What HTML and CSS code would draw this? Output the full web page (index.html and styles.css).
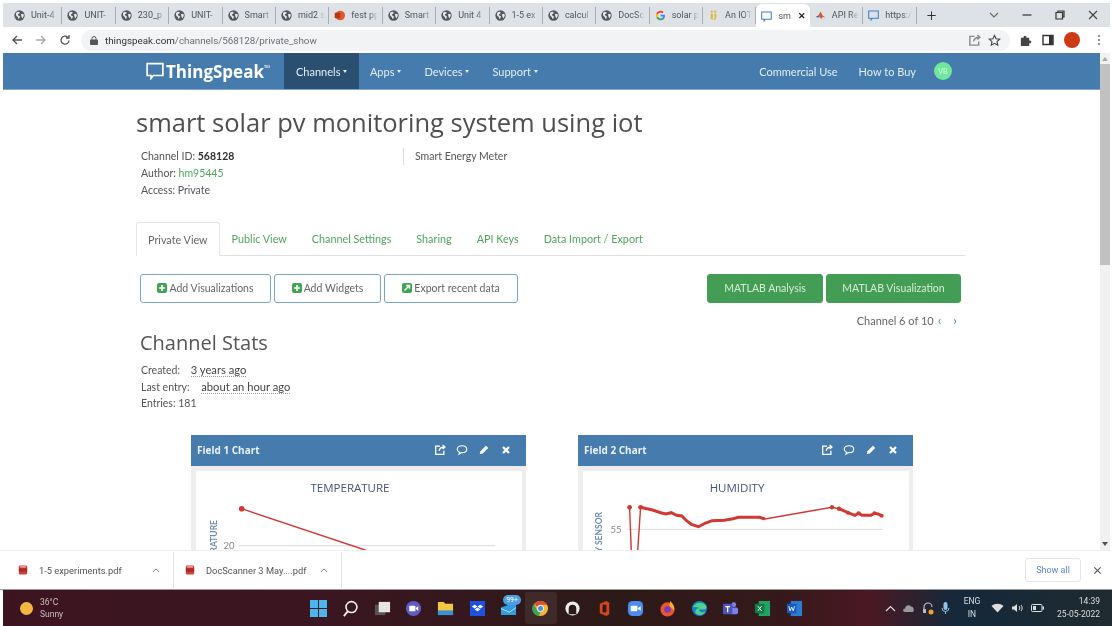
FILE: index.html
```html
<!DOCTYPE html>
<html lang="en">
<head>
  <meta charset="UTF-8">
  <title>smart solar pv monitoring system using iot - ThingSpeak</title>
  <link rel="stylesheet" href="styles.css">
</head>
<body>
  <svg class="sprite" width="0" height="0">
    <symbol id="globe" viewBox="0 0 16 16">
      <circle cx="8" cy="8" r="7.5" fill="#55585c"/>
      <path d="M3 4l3-1.5 2.5 1-1 2-2 .5 1 2.5 2 .5-.5 3-1.5 1-1-3-2.5-2zM10 6l3.5-.5.8 3-2 3.500-1.300-2z" fill="#e8eaed"/>
    </symbol>
    <symbol id="bubble" viewBox="0 0 16 16">
      <path d="M1 1.500h14v10.500h-8.500l-2 2.500v-2.500h-3.500z" fill="none" stroke="currentColor" stroke-width="1.500"/>
    </symbol>
    <symbol id="share" viewBox="0 0 14 14">
      <path d="M7 2.500h-5v9.500h9.500v-4M6 8c.5-3 2.500-4.500 6.500-4.500M10 1l2.800 2.500-2.800 2.500" fill="none" stroke="currentColor" stroke-width="1.500"/>
    </symbol>
    <symbol id="comment" viewBox="0 0 14 14">
      <path d="M7 2c3.300 0 5.500 1.800 5.500 4s-2.200 4-5.500 4l-1 0-2.500 2 .4-2.600c-1.600-.7-2.400-2-2.400-3.400 0-2.200 2.200-4 5.500-4z" fill="none" stroke="currentColor" stroke-width="1.300"/>
    </symbol>
    <symbol id="pencil" viewBox="0 0 14 14">
      <path d="M2 12l.8-3.500 6.500-6.500 2.700 2.700-6.500 6.500z" fill="currentColor"/>
    </symbol>
    <symbol id="cross" viewBox="0 0 14 14">
      <path d="M3.500 3.500l7 7m0-7l-7 7" fill="none" stroke="currentColor" stroke-width="2.600"/>
    </symbol>
    <symbol id="plus-box" viewBox="0 0 12 12">
      <rect width="12" height="12" rx="2.500" fill="#43a353"/>
      <path d="M6 2.500v7M2.500 6h7" stroke="#fff" stroke-width="2"/>
    </symbol>
    <symbol id="pdf" viewBox="0 0 12 12">
      <path d="M2 .5h8l1 1v9l-1 1h-8l-1-1v-9z" fill="#d0403a"/>
      <rect x="1" y="4" width="10" height="4" fill="#a82a2a"/>
      <rect x="2.500" y="1.500" width="7" height="1.500" fill="#f3b9b5"/>
    </symbol>
  </svg>

  <div class="tabstrip">
    <div class="tab"><svg class="favicon"><use href="#globe"/></svg><span>Unit-4</span></div>
    <div class="tab"><svg class="favicon"><use href="#globe"/></svg><span>UNIT-</span></div>
    <div class="tab"><svg class="favicon"><use href="#globe"/></svg><span>230_p</span></div>
    <div class="tab"><svg class="favicon"><use href="#globe"/></svg><span>UNIT-</span></div>
    <div class="tab"><svg class="favicon"><use href="#globe"/></svg><span>Smart</span></div>
    <div class="tab"><svg class="favicon"><use href="#globe"/></svg><span>mid2 s</span></div>
    <div class="tab">
      <svg class="favicon" viewBox="0 0 16 16"><circle cx="9" cy="8" r="7" fill="#e2572b"/><rect x="1" y="4" width="8" height="8" rx="1" fill="#b7361a"/></svg>
      <span>fest pp</span>
    </div>
    <div class="tab"><svg class="favicon"><use href="#globe"/></svg><span>Smart</span></div>
    <div class="tab"><svg class="favicon"><use href="#globe"/></svg><span>Unit 4</span></div>
    <div class="tab"><svg class="favicon"><use href="#globe"/></svg><span>1-5 ex</span></div>
    <div class="tab"><svg class="favicon"><use href="#globe"/></svg><span>calcul</span></div>
    <div class="tab"><svg class="favicon"><use href="#globe"/></svg><span>DocSc</span></div>
    <div class="tab">
      <svg class="favicon" viewBox="0 0 16 16">
        <path d="M14.500 8.200c0-.5 0-1-.1-1.400h-6.300v2.700h3.600c-.2.900-.7 1.600-1.400 2.100l2.200 1.700c1.300-1.200 2-3 2-5.100z" fill="#4285f4"/>
        <path d="M8.100 15c1.900 0 3.400-.6 4.500-1.700l-2.200-1.700c-.6.400-1.400.7-2.300.7-1.800 0-3.300-1.200-3.800-2.800l-2.300 1.800c1.100 2.200 3.400 3.700 6.100 3.700z" fill="#34a853"/>
        <path d="M4.300 9.500c-.3-.9-.3-1.900 0-2.800l-2.300-1.800c-1 1.900-1 4.400 0 6.400z" fill="#fbbc05"/>
        <path d="M8.100 3.800c1 0 1.900.3 2.600 1l1.900-1.900c-1.200-1.100-2.800-1.800-4.500-1.800-2.700 0-5 1.500-6.100 3.800l2.300 1.800c.5-1.700 2-2.900 3.800-2.900z" fill="#ea4335"/>
      </svg>
      <span>solar p</span>
    </div>
    <div class="tab">
      <svg class="favicon" viewBox="0 0 16 16"><path d="M4 1h3v3h-3zM9 1h3v3h-3zM4 5.500h3v8h-3zM9 5.500h3v6l-2 3h-2l1-2.500h1z" fill="#e0b53c"/></svg>
      <span>An IOT</span>
    </div>
    <div class="tab tab-active"><svg class="favicon tab-blue"><use href="#bubble"/></svg><span>sm</span><b class="tab-close">✕</b></div>
    <div class="tab">
      <svg class="favicon" viewBox="0 0 16 16"><path d="M1 10l4-2 3-6 3 6 4 3-4-1-2 3-3-4z" fill="#d9552a"/><path d="M1 10l4-2 2 2-3 1z" fill="#2f6fb5"/></svg>
      <span>API Re</span>
    </div>
    <div class="tab"><svg class="favicon tab-blue"><use href="#bubble"/></svg><span>https:/</span></div>
    <div class="new-tab">+</div>
    <div class="window-controls">
      <svg width="12" height="12" viewBox="0 0 12 12"><path d="M2 4l4 4 4-4" fill="none" stroke="#666" stroke-width="1.100"/></svg>
      <svg width="12" height="12" viewBox="0 0 12 12"><path d="M1.500 6h9" stroke="#333" stroke-width="1.200"/></svg>
      <svg width="12" height="12" viewBox="0 0 12 12"><path d="M2 3.500h6.500v6.500h-6.500zM4 3.500v-1.500h6v6h-1.500" fill="none" stroke="#333" stroke-width="1.200"/></svg>
      <svg width="12" height="12" viewBox="0 0 12 12"><path d="M2 2l8 8m0-8l-8 8" stroke="#444" stroke-width="1.100"/></svg>
    </div>
  </div>

  <div class="toolbar">
    <div class="nav-buttons">
      <svg width="12" height="12" viewBox="0 0 12 12"><path d="M11 6h-9M6 2l-4 4 4 4" fill="none" stroke="#555" stroke-width="1.300"/></svg>
      <svg width="12" height="12" viewBox="0 0 12 12"><path d="M1 6h9M6 2l4 4-4 4" fill="none" stroke="#aaa" stroke-width="1.300"/></svg>
      <svg width="12" height="12" viewBox="0 0 12 12"><path d="M10 6.500a4 4 0 1 1-1.200-3.200M10 1v3h-3" fill="none" stroke="#555" stroke-width="1.300"/></svg>
    </div>
    <div class="omnibox">
      <svg width="8" height="9" viewBox="0 0 8 9"><rect y="3.500" width="8" height="5.500" rx="1" fill="#555"/><path d="M2 4v-1.500a2 2 0 0 1 4 0v1.500" fill="none" stroke="#555"/></svg>
      <span class="url"><b>thingspeak.com</b>/channels/568128/private_show</span>
      <svg class="omni-share"><use href="#share"/></svg>
      <svg width="13" height="13" viewBox="0 0 14 14"><path d="M7 1.500l1.700 3.600 3.900.5-2.900 2.600.8 3.900-3.500-2-3.500 2 .8-3.900-2.900-2.600 3.900-.5z" fill="none" stroke="#444" stroke-width="1.200"/></svg>
    </div>
    <div class="toolbar-icons">
      <svg width="13" height="13" viewBox="0 0 14 14"><path d="M2 4h3c-.8-3 3.800-3 3 0h3v3c3-.8 3 3.800 0 3v3h-9z" fill="#444"/></svg>
      <svg width="12" height="12" viewBox="0 0 12 12"><path d="M1 1.500h10v9h-10z" fill="none" stroke="#333" stroke-width="1.400"/><rect x="7" y="1.500" width="4" height="9" fill="#333"/></svg>
      <span class="profile"></span>
      <svg class="menu-dots" width="4" height="12" viewBox="0 0 4 12"><circle cx="2" cy="2" r="1" fill="#666"/><circle cx="2" cy="6" r="1" fill="#666"/><circle cx="2" cy="10" r="1" fill="#666"/></svg>
    </div>
  </div>

  <div class="viewport">
    <div class="page">
      <header class="site-nav">
        <div class="brand">
          <svg class="brand-icon"><use href="#bubble"/></svg>
          <span>ThingSpeak</span><sup>™</sup>
        </div>
        <a class="nav-item nav-active">Channels <i class="caret"></i></a>
        <a class="nav-item nav-apps">Apps <i class="caret"></i></a>
        <a class="nav-item">Devices<i class="caret"></i></a>
        <a class="nav-item">Support<i class="caret"></i></a>
        <a class="nav-item nav-right">Commercial Use</a>
        <a class="nav-item nav-buy">How to Buy</a>
        <span class="avatar">VB</span>
      </header>

      <main class="content">
        <h1>smart solar pv monitoring system using iot</h1>
        <div class="channel-info">
          <div class="channel-meta">
            <div>Channel ID: <b>568128</b></div>
            <div>Author: <a class="link">hm95445</a></div>
            <div>Access: Private</div>
          </div>
          <div class="channel-desc">Smart Energy Meter</div>
        </div>

        <nav class="tabs">
          <a class="page-tab page-tab-active">Private View</a>
          <a class="page-tab">Public View</a>
          <a class="page-tab">Channel Settings</a>
          <a class="page-tab">Sharing</a>
          <a class="page-tab">API Keys</a>
          <a class="page-tab">Data Import / Export</a>
        </nav>

        <div class="actions">
          <button class="btn btn-vis"><svg class="btn-icon"><use href="#plus-box"/></svg>Add Visualizations</button>
          <button class="btn btn-wid"><svg class="btn-icon"><use href="#plus-box"/></svg>Add Widgets</button>
          <button class="btn btn-exp">
            <svg class="btn-icon" viewBox="0 0 12 12"><rect width="12" height="12" rx="2.500" fill="#43a353"/><path d="M3 9l5-5M5 3h4v4" fill="none" stroke="#fff" stroke-width="1.600"/></svg>Export recent data
          </button>
          <button class="btn btn-green btn-ana">MATLAB Analysis</button>
          <button class="btn btn-green btn-matvis">MATLAB Visualization</button>
        </div>

        <div class="pager">Channel 6 of 10 <span class="pager-arrows"><i>‹</i><i>›</i></span></div>

        <h2>Channel Stats</h2>
        <div class="stats">
          <div>Created: <abbr>3 years ago</abbr></div>
          <div>Last entry: <abbr>about an hour ago</abbr></div>
          <div>Entries: 181</div>
        </div>

        <div class="charts">
          <section class="chart-panel">
            <div class="chart-head">
              <span>Field 1 Chart</span>
              <div class="chart-tools">
                <svg><use href="#share"/></svg><svg><use href="#comment"/></svg><svg><use href="#pencil"/></svg><svg><use href="#cross"/></svg>
              </div>
            </div>
            <div class="chart-body">
              <svg class="chart" viewBox="0 0 326 120">
                <text class="chart-title" x="154" y="21">TEMPERATURE</text>
                <line class="grid" x1="43" y1="74.700" x2="299" y2="74.700"/>
                <text class="tick" x="33" y="78">20</text>
                <text class="axis-label" transform="translate(21 49) rotate(-90)">TEMPERATURE</text>
                <polyline class="series" points="45.700,37.700 169,79 230,105"/>
                <circle class="dot" cx="45.700" cy="37.700" r="2.800"/>
              </svg>
            </div>
          </section>
          <section class="chart-panel">
            <div class="chart-head">
              <span>Field 2 Chart</span>
              <div class="chart-tools">
                <svg><use href="#share"/></svg><svg><use href="#comment"/></svg><svg><use href="#pencil"/></svg><svg><use href="#cross"/></svg>
              </div>
            </div>
            <div class="chart-body">
              <svg class="chart" viewBox="0 0 326 120">
                <text class="chart-title" x="154" y="21">HUMIDITY</text>
                <line class="grid" x1="44" y1="58.300" x2="300" y2="58.300"/>
                <text class="tick" x="33" y="62">55</text>
                <text class="axis-label" transform="translate(19 41) rotate(-90)">HUMIDITY SENSOR</text>
                <polyline class="series" points="46.600,36.300 48.700,90 54,90 57.600,36.300 61.800,37.300 69.600,39 77.700,41.700 83,43 88.300,41.700 93.600,44.300 98.900,45 103.500,49.700 108.400,53.300 115.500,55.700 121.900,52.300 129,49.700 141.300,49.300 150,47.700 155.400,46.300 176.600,46.300 182,48 249,36.300 256,37.700 265,41.700 272,44.300 275.600,42.300 279,44.300 288,44.300 291.500,42.300 295,43 298.600,44.700"/>
                <polyline class="series series-thick" points="57.600,36.300 61.800,37.300 69.600,39 77.700,41.700 83,43 88.300,41.700 93.600,44.300 98.900,45 103.500,49.700 108.400,53.300 115.500,55.700 121.900,52.300 129,49.700 141.300,49.300 150,47.700 155.400,46.300 176.600,46.300 182,48"/>
                <polyline class="series series-thick" points="256,37.700 265,41.700 272,44.300 275.600,42.300 279,44.300 288,44.300 291.500,42.300 295,43 298.600,44.700"/>
                <circle class="dot" cx="46.600" cy="36.300" r="2.400"/>
                <circle class="dot" cx="57.600" cy="36.300" r="2.400"/>
                <circle class="dot" cx="249" cy="36.300" r="2.200"/>
                <circle class="dot" cx="256" cy="37.700" r="2.200"/>
                <circle class="dot" cx="265" cy="41.700" r="2"/>
                <circle class="dot" cx="275.600" cy="42.300" r="2"/>
                <circle class="dot" cx="291.500" cy="42.300" r="2"/>
                <circle class="dot" cx="298.600" cy="44.700" r="2"/>
              </svg>
            </div>
          </section>
        </div>
      </main>
    </div>
    <div class="scrollbar">
      <span class="scroll-up"></span>
      <span class="scroll-thumb"></span>
      <span class="scroll-down"></span>
    </div>
  </div>

  <div class="downloads">
    <div class="download dl-first">
      <svg class="pdf-icon"><use href="#pdf"/></svg>
      <span>1-5 experiments.pdf</span>
      <svg class="dl-chevron" viewBox="0 0 10 6"><path d="M1 5l4-4 4 4" fill="none" stroke="#666" stroke-width="1.100"/></svg>
    </div>
    <div class="download dl-second">
      <svg class="pdf-icon"><use href="#pdf"/></svg>
      <span>DocScanner 3 May....pdf</span>
      <svg class="dl-chevron" viewBox="0 0 10 6"><path d="M1 5l4-4 4 4" fill="none" stroke="#666" stroke-width="1.100"/></svg>
    </div>
    <button class="show-all">Show all</button>
    <svg class="dl-close" viewBox="0 0 10 10"><path d="M1.500 1.500l7 7m0-7l-7 7" stroke="#555" stroke-width="1.200"/></svg>
  </div>

  <footer class="taskbar">
    <div class="weather">
      <span class="sun"></span>
      <div class="weather-text"><div>36°C</div><div>Sunny</div></div>
    </div>
    <div class="task-icons">
      <svg viewBox="0 0 18 18"><path d="M0 0h8.500v8.500h-8.500zM9.500 0h8.500v8.500h-8.500zM0 9.500h8.500v8.500h-8.500zM9.500 9.500h8.500v8.500h-8.500z" fill="#4db4ee"/></svg>
      <svg viewBox="0 0 18 18"><circle cx="10" cy="7.500" r="5.800" fill="none" stroke="#eee" stroke-width="1.700"/><path d="M6 12l-4 5" stroke="#eee" stroke-width="2"/></svg>
      <svg viewBox="0 0 18 18"><rect x="1" y="5" width="11" height="11" fill="#555"/><rect x="5" y="2" width="12" height="11" fill="#e6e6e6"/></svg>
      <svg viewBox="0 0 18 18"><circle cx="9" cy="9" r="8" fill="#5f5cc9"/><rect x="4.500" y="6" width="6.500" height="6" rx="1" fill="#fff"/><path d="M11.500 8.500l2.500-2v5l-2.500-2z" fill="#fff"/></svg>
      <svg viewBox="0 0 18 18"><path d="M1 2h6l2 2h8v12h-16z" fill="#f5c842"/><rect x="1" y="11" width="16" height="5" fill="#3c8fd0"/></svg>
      <svg viewBox="0 0 18 18"><rect x="1" y="1" width="16" height="16" fill="#1f50e0"/><path d="M6 5l3 2-3 2-3-2zM12 5l3 2-3 2-3-2zM6 10l3-2 3 2-3 2z" fill="#fff"/></svg>
      <div class="mail-icon">
        <svg viewBox="0 0 18 18"><path d="M1 8l16-6v14h-16z" fill="#2f9be0"/><path d="M1 9l9 4 7-5" fill="none" stroke="#bfe3fa" stroke-width="1"/></svg>
        <span class="mail-badge">99+</span>
      </div>
      <div class="chrome-slot">
        <svg viewBox="0 0 18 18">
          <circle cx="9" cy="9" r="8" fill="#f2b632"/>
          <path d="M9 1a8 8 0 0 1 7 4h-7a4 4 0 0 0-3.500 2l-3.500-3a8 8 0 0 1 7-3z" fill="#dd4b39"/>
          <path d="M2 4l3.500 7a4 4 0 0 0 3.500 2l-2 4a8 8 0 0 1-5-13z" fill="#3aa457"/>
          <circle cx="9" cy="9" r="3.300" fill="#4a90e2" stroke="#fff"/>
        </svg>
      </div>
      <svg viewBox="0 0 18 18"><circle cx="9" cy="9" r="7.500" fill="#eee"/><path d="M5 15v-6a4 4 0 0 1 8 0v6" fill="#2a1a18"/></svg>
      <svg viewBox="0 0 18 18"><path d="M4 4l7-3 3 2v12l-3 2-7-3z" fill="#d9431e"/><rect x="7" y="5" width="4" height="8" fill="#2a1a18"/></svg>
      <svg viewBox="0 0 18 18"><rect x="1" y="1" width="16" height="16" rx="5" fill="#4a8cf0"/><rect x="4" y="6" width="7" height="6" rx="1" fill="#fff"/><path d="M11.500 8.500l3-2v5l-3-2z" fill="#fff"/></svg>
      <svg viewBox="0 0 18 18"><circle cx="9" cy="10" r="7.500" fill="#e8572d"/><circle cx="9" cy="10" r="3.500" fill="#7a3bc4"/><path d="M12 1c3 3 4.500 6 4 10l-5-5z" fill="#f8b32c"/></svg>
      <svg viewBox="0 0 18 18"><circle cx="9" cy="9" r="8" fill="#1a7fc1"/><path d="M2 8c2-6 11-7 14-2 1 2 0 4-2.500 4h-5c0 3 4 4 7 2-2 5-9 5-11 1 0-3 2-5 5-4-3-2-6-2-7.500-1z" fill="#4fd28b"/></svg>
      <svg viewBox="0 0 18 18"><circle cx="12.500" cy="5" r="2.500" fill="#7b83eb"/><rect x="8" y="8" width="9" height="7" rx="2" fill="#7b83eb"/><rect x="1" y="4" width="10" height="11" rx="1" fill="#4b53bc"/><path d="M3.500 7h5M6 7v6" stroke="#fff" stroke-width="1.300"/></svg>
      <svg viewBox="0 0 18 18"><rect x="5" y="1" width="12" height="16" fill="#21a366"/><rect x="1" y="4" width="10" height="10" fill="#107c41"/><path d="M4 6.500l4 5m0-5l-4 5" stroke="#fff"/></svg>
      <svg viewBox="0 0 18 18"><rect x="5" y="1" width="12" height="16" fill="#2b7cd3"/><rect x="1" y="4" width="10" height="10" fill="#185abd"/><path d="M3 6.500l1.300 5 1.700-4 1.700 4 1.300-5" fill="none" stroke="#fff" stroke-width=".9"/></svg>
    </div>
    <div class="tray">
      <svg width="11" height="7" viewBox="0 0 11 7"><path d="M1 6l4.500-4.500 4.500 4.500" fill="none" stroke="#ddd" stroke-width="1.200"/></svg>
      <svg width="12" height="10" viewBox="0 0 12 10"><path d="M2 9c-2.500 0-2.500-3.500 0-3.500 0-3 4-4.500 6-2 3 0 4 5.500 1 5.500z" fill="#999"/></svg>
      <svg width="12" height="14" viewBox="0 0 12 14"><path d="M2 8v-2a4 4 0 0 1 8 0" fill="none" stroke="#bbb" stroke-width="1.200"/><rect x="1" y="8" width="3" height="4" fill="#bbb"/><circle cx="9" cy="11" r="2.500" fill="#f0a030"/></svg>
      <svg width="9" height="14" viewBox="0 0 9 14"><rect x="2.500" y="1" width="4" height="8" rx="2" fill="#8fc7e8"/><path d="M1 7a3.500 3.500 0 0 0 7 0M4.500 11v2" fill="none" stroke="#8fc7e8"/></svg>
      <div class="lang"><div>ENG</div><div>IN</div></div>
      <svg width="13" height="10" viewBox="0 0 13 10"><path d="M6.500 9.500l-6-6.500c3.500-3 8.500-3 12 0z" fill="#ddd"/></svg>
      <svg width="13" height="10" viewBox="0 0 13 10"><path d="M1 3.500h2l3-2.500v8l-3-2.500h-2z" fill="#ddd"/><path d="M8 3c1 1 1 3 0 4M10 2c1.500 1.500 1.500 4.500 0 6" fill="none" stroke="#ddd"/></svg>
      <svg width="13" height="8" viewBox="0 0 13 8"><rect x=".5" y=".5" width="10.500" height="7" rx="1" fill="none" stroke="#ddd"/><rect x="2" y="2" width="3" height="4" fill="#ddd"/><rect x="11.500" y="2.500" width="1.500" height="3" fill="#ddd"/></svg>
      <div class="clock"><div>14:39</div><div>25-05-2022</div></div>
    </div>
  </footer>
</body>
</html>
```

FILE: styles.css
```css
* {
  margin: 0;
  padding: 0;
  box-sizing: border-box;
}

html, body {
  width: 1112px;
  height: 626px;
  overflow: hidden;
  background-color: white;
}

body {
  display: flex;
  flex-direction: column;
  padding: 3px 0 0 3px;
  font-family: Lato, "Open Sans", sans-serif;
  font-size: 10.5px;
  color: #555;
  filter: blur(0.6px);
}

.sprite {
  position: absolute;
}

/* browser chrome */

.tabstrip {
  display: flex;
  align-items: center;
  height: 24px;
  padding-left: 6px;
  margin-right: 2px;
  background-color: #dee1e6;
  font-family: Roboto, sans-serif;
  font-size: 9px;
  color: #50555a;
}

.tab {
  display: flex;
  align-items: center;
  gap: 6px;
  width: 53.4px;
  height: 17px;
  padding-left: 5px;
  border-right: 1px solid #a9adb3;
  white-space: nowrap;
  flex-shrink: 0;
}

.tab span {
  width: 30px;
  -webkit-mask-image: linear-gradient(to right, black 60%, transparent 90%);
  mask-image: linear-gradient(to right, black 60%, transparent 90%);
}

.favicon {
  width: 11px;
  height: 11px;
  flex-shrink: 0;
}

.tab-blue {
  color: #3b82c4;
}

.tab-active {
  height: 24px;
  margin-top: 2px;
  border-right: none;
  border-radius: 6px 6px 0 0;
  background-color: white;
}

.tab-active span {
  width: 14px;
  -webkit-mask-image: none;
  mask-image: none;
}

.tab-close {
  font-size: 9px;
  color: #222;
}

.new-tab {
  margin-left: 10px;
  font-size: 17px;
  font-weight: 300;
  color: #333;
}

.window-controls {
  display: flex;
  gap: 21px;
  margin-left: auto;
  margin-right: 11px;
}

.toolbar {
  display: flex;
  align-items: center;
  height: 26px;
  margin-right: 2px;
  background-color: white;
}

.nav-buttons {
  display: flex;
  gap: 12px;
  padding-left: 8px;
  width: 78px;
}

.omnibox {
  display: flex;
  align-items: center;
  gap: 6px;
  width: 929px;
  height: 21px;
  padding: 0 9px;
  border-radius: 11px;
  background-color: #f1f3f4;
  font-family: Roboto, sans-serif;
  font-size: 9.8px;
  color: #6b6f74;
}

.url {
  flex: 1;
  padding-left: 1px;
}

.url b {
  font-weight: 400;
  color: #333;
}

.omni-share {
  width: 13px;
  height: 13px;
  margin-right: 1px;
  color: #888;
}

.toolbar-icons {
  display: flex;
  align-items: center;
  gap: 10px;
  padding-left: 9px;
}

.menu-dots {
  margin-left: 7px;
}

.profile {
  width: 16px;
  height: 16px;
  border-radius: 50%;
  background-color: #cc3a16;
}

.viewport {
  display: flex;
  height: 497px;
  margin-top: 0;
}

.page {
  width: 1097px;
  overflow: hidden;
}

.scrollbar {
  display: flex;
  flex-direction: column;
  align-items: center;
  width: 10px;
  background-color: #f1f1f1;
}

.scroll-thumb {
  width: 100%;
  height: 201px;
  margin-top: 3px;
  background-color: #c1c1c1;
}

.scroll-up, .scroll-down {
  width: 0;
  height: 0;
  margin-top: 4px;
  border-left: 3px solid transparent;
  border-right: 3px solid transparent;
  border-bottom: 4px solid #aaa;
}

.scroll-down {
  margin-top: auto;
  margin-bottom: 4px;
  border-bottom: none;
  border-top: 4px solid #505050;
}

/* site nav */

.site-nav {
  display: flex;
  align-items: center;
  height: 37px;
  border-bottom: 1px solid #7fa6c9;
  background-color: #457cad;
  color: #e4edf5;
  font-size: 11px;
}

.brand {
  display: flex;
  align-items: center;
  width: 138px;
  height: 100%;
  margin-left: 143px;
  font-family: "Open Sans", sans-serif;
  font-size: 17px;
  font-weight: 700;
  color: white;
}

.brand-icon {
  width: 18px;
  height: 18px;
  margin-right: 2px;
  color: white;
}

.brand sup {
  font-size: 8px;
  font-weight: 400;
  margin-bottom: 8px;
}

.nav-item {
  display: flex;
  align-items: center;
  gap: 3px;
  height: 100%;
  padding: 0 11.5px;
  white-space: nowrap;
}

.nav-active {
  padding: 0 12px;
  background-color: #2b4f70;
}

.nav-apps {
  margin-left: -1px;
}

.nav-right {
  margin-left: auto;
}

.nav-buy {
  padding: 0 10px 0 9.500px;
}

.caret {
  width: 0;
  height: 0;
  border-left: 2.5px solid transparent;
  border-right: 2.5px solid transparent;
  border-top: 3px solid #e4edf5;
}

.avatar {
  display: flex;
  justify-content: center;
  align-items: center;
  width: 18px;
  height: 18px;
  margin: 0 148px 0 8px;
  border-radius: 50%;
  background-color: #6fe89b;
  color: #d9f9e5;
  font-size: 7px;
}

/* channel page */

.content {
  width: 829px;
  margin-left: 133px;
}

h1 {
  margin-top: 17px;
  font-family: "Open Sans", sans-serif;
  font-size: 25.5px;
  font-weight: 400;
  line-height: 30px;
  color: #4f4f4f;
  white-space: nowrap;
}

.channel-info {
  display: flex;
  margin: 11px 0 0 5px;
  line-height: 17px;
}

.channel-meta {
  width: 262px;
}

.channel-meta b, .stats b {
  color: #333;
}

.channel-desc {
  height: 17px;
  padding-left: 11px;
  border-left: 1px solid #ddd;
}

.link, .page-tab {
  color: #4fa65b;
}

.tabs {
  display: flex;
  height: 34px;
  margin-top: 23px;
  border-bottom: 1px solid #e0e0e0;
  font-size: 10.8px;
}

.page-tab {
  display: flex;
  align-items: center;
  padding: 0 12px;
  margin-right: 1px;
}

.page-tab-active {
  height: 34px;
  padding: 0 11px;
  margin-right: 0;
  border: 1px solid #e6e6e6;
  border-bottom-color: white;
  border-radius: 3px 3px 0 0;
  color: #666;
}

.actions {
  display: flex;
  gap: 3px;
  margin: 18px 4px 0 4px;
  height: 29px;
}

.btn {
  display: flex;
  justify-content: center;
  align-items: center;
  height: 29px;
  padding-bottom: 1.5px;
  border: 1px solid #7aa5cb;
  border-radius: 3px;
  background-color: white;
  font-family: Lato, sans-serif;
  font-size: 10.5px;
  color: #666;
}

.btn-vis { width: 131px; }
.btn-wid { width: 107px; }
.btn-exp { width: 134px; }

.btn-icon {
  width: 10px;
  height: 10px;
  margin-right: 2px;
}

.btn-green {
  border-color: #449d55;
  background-color: #449d55;
  color: #d5ecd9;
}

.btn-ana {
  width: 116px;
  margin-left: auto;
}

.btn-matvis {
  width: 135px;
}

.pager {
  display: flex;
  justify-content: flex-end;
  align-items: center;
  gap: 4px;
  height: 14px;
  margin: 10px 8px 0 0;
  color: #666;
  font-size: 11px;
}

.pager-arrows {
  display: flex;
  gap: 12px;
  font-size: 13px;
  color: #4fa65b;
}

.pager-arrows i {
  font-style: normal;
}

h2 {
  margin: 4px 0 0 4px;
  font-family: "Open Sans", sans-serif;
  font-size: 20px;
  font-weight: 400;
  line-height: 24px;
  color: #555;
}

.stats {
  margin: 7px 0 0 5px;
  line-height: 16.5px;
}

abbr {
  margin-left: 8px;
  font-size: 11.2px;
  color: #444;
  border-bottom: 1px dotted #999;
}

.stats div:nth-child(2) abbr {
  margin-left: 9px;
}

.charts {
  display: flex;
  gap: 52px;
  margin: 23px 0 0 55px;
}

.chart-panel {
  width: 335px;
  background-color: #eeeeee;
}

.chart-head {
  display: flex;
  justify-content: space-between;
  align-items: center;
  height: 31px;
  padding: 0 14px 0 6px;
  background-color: #457cad;
  color: #eaf1f7;
  font-family: "Open Sans", sans-serif;
  font-size: 10px;
  font-weight: 700;
}

.chart-tools {
  display: flex;
  gap: 10px;
}

.chart-tools svg {
  width: 12px;
  height: 12px;
  color: white;
}

.chart-body {
  padding: 5px 5px 0 5px;
}

.chart {
  display: block;
  width: 326px;
  height: 120px;
  background-color: white;
}

.chart-title {
  font-family: "Open Sans", sans-serif;
  font-size: 11.5px;
  fill: #47556e;
  text-anchor: middle;
}

.tick {
  font-size: 9.5px;
  fill: #888;
  text-anchor: middle;
}

.axis-label {
  font-size: 8.5px;
  font-weight: 700;
  fill: #6f8db0;
  text-anchor: end;
}

.grid {
  stroke: #dcdcdc;
}

.series {
  fill: none;
  stroke: #cf3a32;
  stroke-width: 1.4;
}

.series-thick {
  stroke-width: 3;
}

.dot {
  fill: #cf3a32;
}

/* downloads bar */

.downloads {
  display: flex;
  align-items: center;
  height: 40px;
  margin-left: -3px;
  border-top: 1px solid #eee;
  border-bottom: 1px solid #99989a;
  background-color: white;
  font-family: Roboto, sans-serif;
  font-size: 9.3px;
  color: #555;
}

.download {
  display: flex;
  align-items: center;
  height: 36px;
  padding-left: 18px;
  border-right: 1px solid #e3e3e3;
}

.dl-first { width: 174px; }
.dl-second {
  width: 168px;
  padding-left: 11px;
}

.pdf-icon {
  width: 10px;
  height: 10px;
  margin-right: 11px;
}

.dl-chevron {
  width: 8px;
  height: 5px;
  margin-left: auto;
  margin-right: 13px;
}

.show-all {
  width: 56px;
  height: 24px;
  margin-left: auto;
  border: 1px solid #e6e6e6;
  border-radius: 3px;
  background-color: white;
  font-family: Roboto, sans-serif;
  font-size: 9px;
  color: #5b85d8;
}

.dl-close {
  width: 9px;
  height: 9px;
  margin: 0 10px 0 12px;
}

/* windows taskbar */

.taskbar {
  display: flex;
  align-items: center;
  height: 36px;
  background: linear-gradient(to right, #3c1420 0%, #3a1620 30%, #2c1a18 55%, #35191a 70%, #4a1822 78%, #14293a 86%, #1f2a30 100%);
  color: #ddd;
  font-family: Roboto, sans-serif;
  font-size: 8px;
}

.weather {
  display: flex;
  align-items: center;
  gap: 7px;
  width: 300px;
  padding-left: 17px;
}

.sun {
  width: 13px;
  height: 13px;
  border-radius: 50%;
  background-color: #f3b93f;
}

.weather-text {
  line-height: 12px;
  font-size: 8.5px;
  color: #c9bfc0;
}

.task-icons {
  display: flex;
  align-items: center;
}

.task-icons > svg, .mail-icon svg, .chrome-slot svg {
  display: block;
  width: 17px;
  height: 17px;
  margin: 0 7.35px;
  flex-shrink: 0;
}

.mail-icon {
  position: relative;
}

.mail-badge {
  position: absolute;
  top: -5px;
  left: 10px;
  padding: 0 3px;
  border-radius: 6px;
  background-color: #4d9ee0;
  color: white;
  font-size: 7px;
  line-height: 10px;
}

.chrome-slot {
  display: flex;
  align-items: center;
  height: 32px;
  border-radius: 3px;
  background-color: #3e2b29;
}

.tray {
  display: flex;
  align-items: center;
  flex: 1;
  gap: 7px;
  margin-left: 75px;
  padding-right: 12px;
}

.lang {
  width: 24px;
  margin-left: 3px;
  font-size: 8.5px;
  line-height: 13px;
  text-align: center;
}

.clock {
  margin-left: auto;
  line-height: 13px;
  text-align: right;
  font-size: 8.5px;
  white-space: nowrap;
}
```
